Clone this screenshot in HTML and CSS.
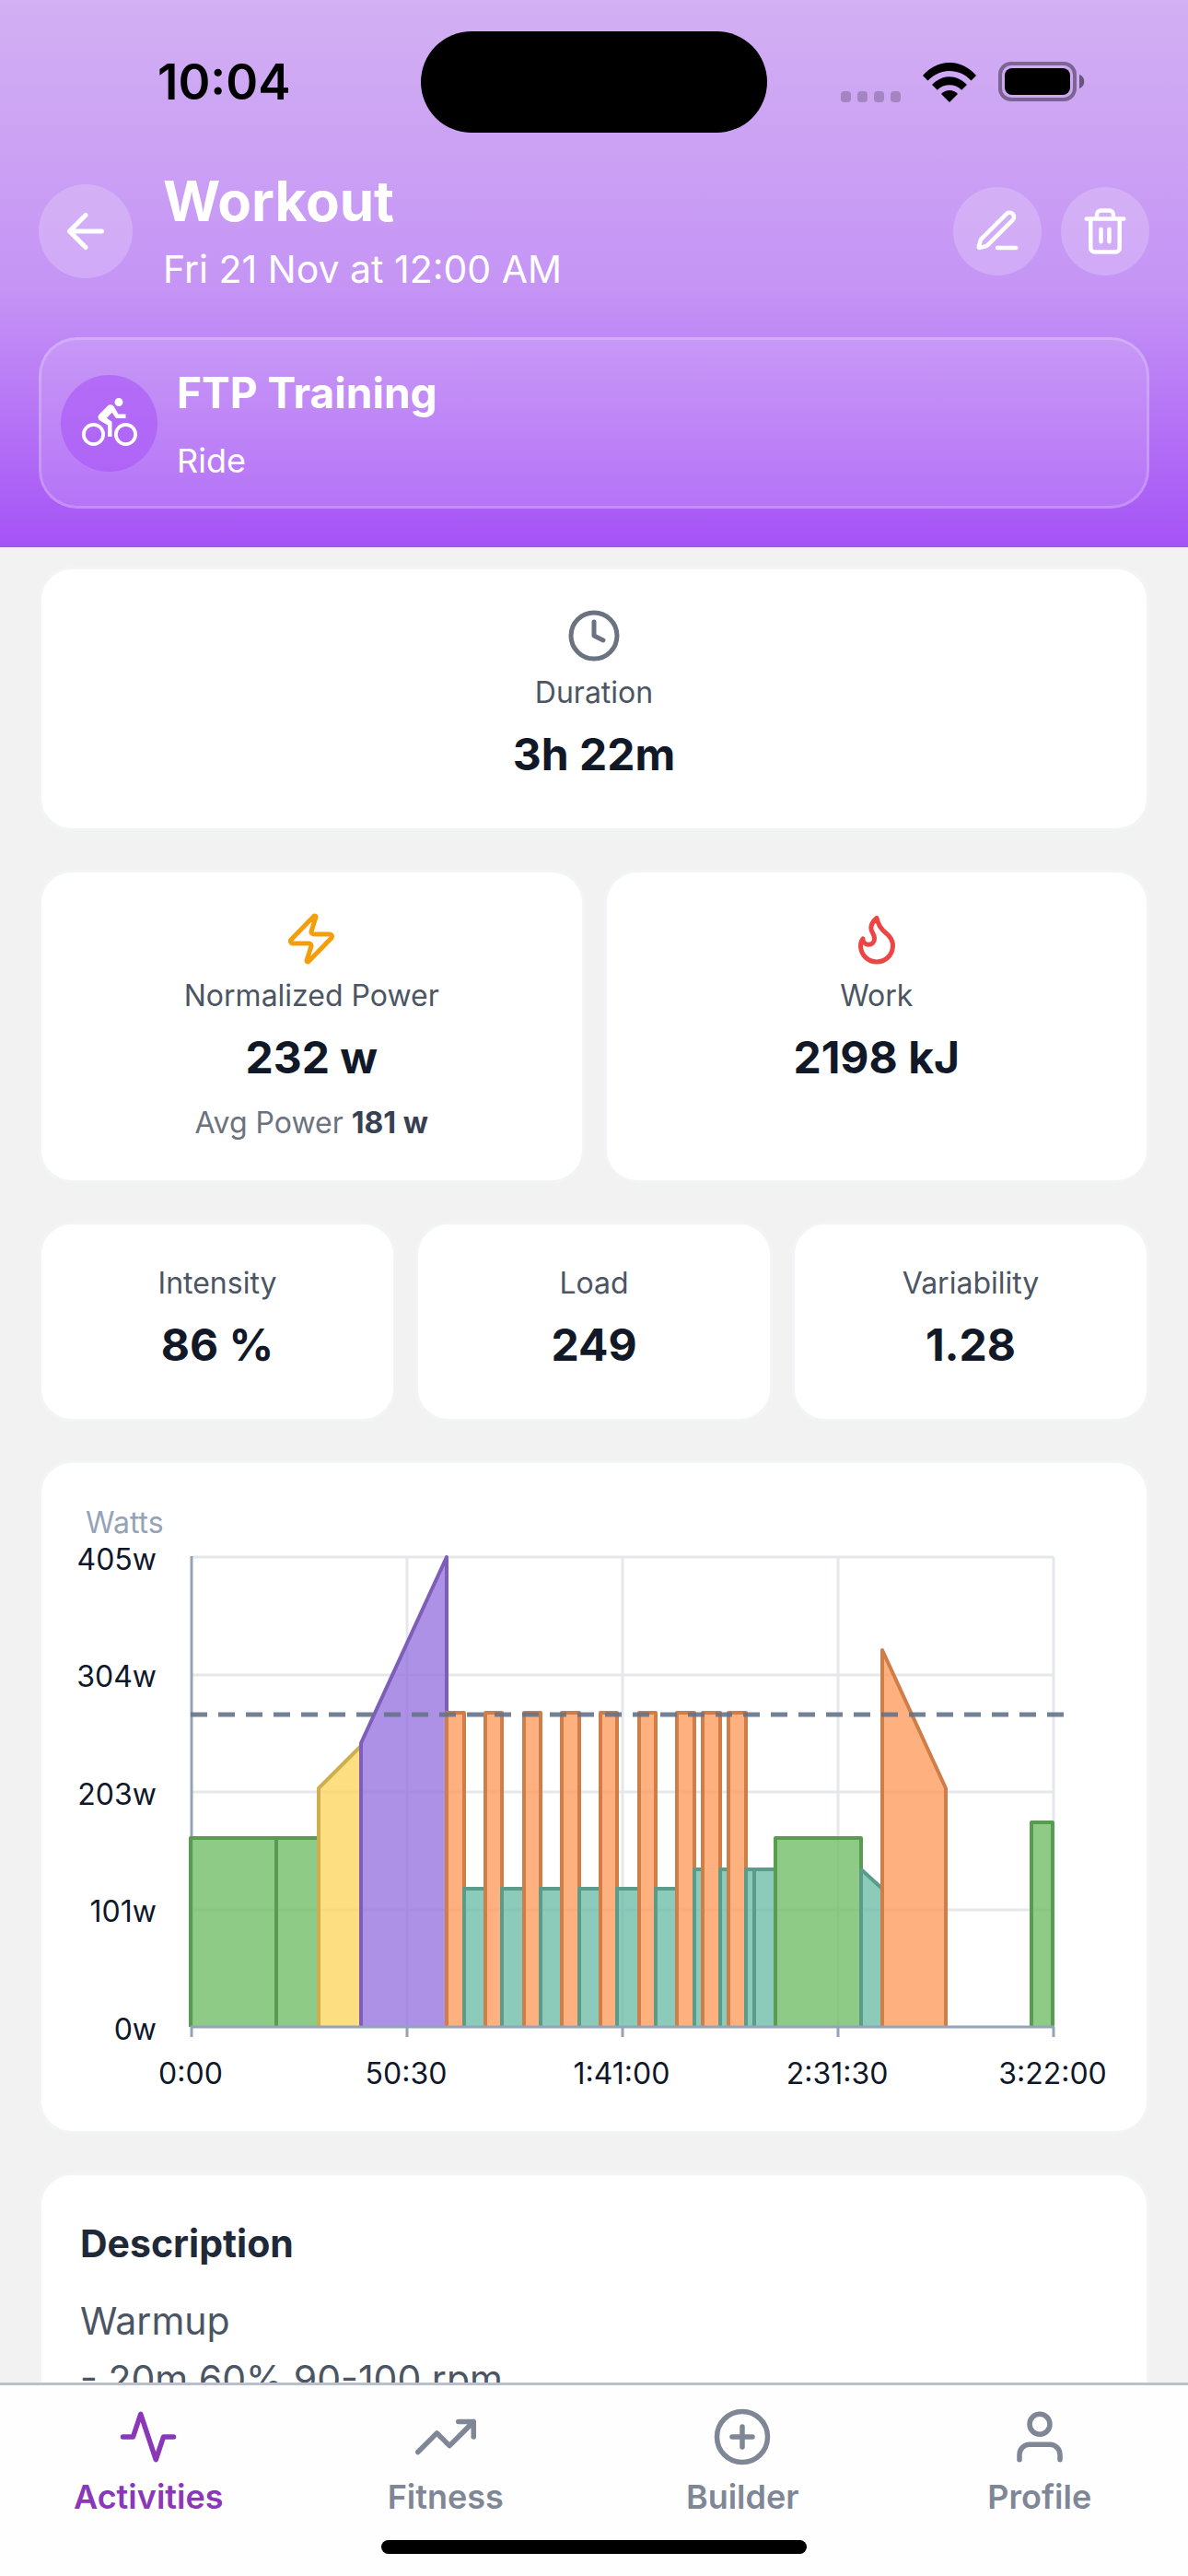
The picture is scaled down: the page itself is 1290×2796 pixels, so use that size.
FILE: index.html
```
<!DOCTYPE html>
<html lang="en">
<head>
<meta charset="utf-8">
<meta name="viewport" content="width=device-width, initial-scale=1">
<title>Workout</title>
<link rel="stylesheet" href="styles.css">
</head>
<body>
<div class="app">
  <header class="header">
    <div class="status-bar">
      <span class="status-time">10:04</span>
      <div class="island"></div>
      <div class="status-icons">
        <svg class="signal" viewBox="0 0 66 12" aria-hidden="true"><rect x="1" width="11" height="12" rx="4"/><rect x="19" width="11" height="12" rx="4"/><rect x="37" width="11" height="12" rx="4"/><rect x="55" width="11" height="12" rx="4"/></svg>
        <svg class="wifi" viewBox="0 0 58 43" aria-hidden="true"><path d="M0 14C16-4.700 42-4.700 58 14L52.500 19.500C39.500 5.600 18.500 5.600 5.500 19.500Z"/><path d="M10 24C21 12.200 37 12.200 48 24L42.200 29.700C35 22.500 23 22.500 15.800 29.700Z"/><path d="M20 34C25 28.800 33 28.800 38 34L29 43Z"/></svg>
        <svg class="battery" viewBox="0 0 94 44" aria-hidden="true"><rect class="battery-case" x="2" y="2" width="81" height="39" rx="12"/><rect x="7" y="7" width="71" height="29" rx="8"/><path class="battery-nub" d="M88 14c7 2 7 13 0 15z"/></svg>
      </div>
    </div>
    <div class="title-row">
      <button class="round-button back-button" type="button" aria-label="Back">
        <svg class="icon icon-md" viewBox="0 0 24 24"><path d="M19 12H5M12 19l-7-7 7-7"/></svg>
      </button>
      <div class="title-text">
        <h1 class="title">Workout</h1>
        <p class="subtitle">Fri 21 Nov at 12:00 AM</p>
      </div>
      <div class="actions">
        <button class="round-button" type="button" aria-label="Edit">
          <svg class="icon icon-sm" viewBox="0 0 24 24"><path d="M12 20h9M16.376 3.622a1 1 0 0 1 3.002 3.002L7.368 18.635a2 2 0 0 1-.855.506l-2.872.838a.5.5 0 0 1-.62-.62l.838-2.872a2 2 0 0 1 .506-.854z"/></svg>
        </button>
        <button class="round-button" type="button" aria-label="Delete">
          <svg class="icon icon-sm" viewBox="0 0 24 24"><path d="M3 6h18M19 6v14a2 2 0 0 1-2 2H7a2 2 0 0 1-2-2V6M8 6V4a2 2 0 0 1 2-2h4a2 2 0 0 1 2 2v2M10 11v6M14 11v6"/></svg>
        </button>
      </div>
    </div>
    <section class="activity">
      <div class="activity-badge">
        <svg class="bike" viewBox="0 0 24 24" aria-hidden="true"><path d="M5,20.5A3.5,3.5 0 0,1 1.5,17A3.5,3.5 0 0,1 5,13.5A3.5,3.5 0 0,1 8.5,17A3.5,3.5 0 0,1 5,20.5M5,12A5,5 0 0,0 0,17A5,5 0 0,0 5,22A5,5 0 0,0 10,17A5,5 0 0,0 5,12M14.8,10H19V8.2H15.8L13.86,4.93C13.57,4.43 13,4.1 12.4,4.1C11.93,4.1 11.5,4.29 11.2,4.6L7.5,8.29C7.19,8.6 7,9 7,9.5C7,10.13 7.33,10.66 7.85,10.97L11.2,13V18H13V11.5L10.75,9.85L13.07,7.5M19,20.5A3.5,3.5 0 0,1 15.5,17A3.5,3.5 0 0,1 19,13.5A3.5,3.5 0 0,1 22.5,17A3.5,3.5 0 0,1 19,20.5M19,12A5,5 0 0,0 14,17A5,5 0 0,0 19,22A5,5 0 0,0 24,17A5,5 0 0,0 19,12M16,4.8C17,4.8 17.8,4 17.8,3C17.8,2 17,1.2 16,1.2C15,1.2 14.2,2 14.2,3C14.2,4 15,4.8 16,4.8Z"/></svg>
      </div>
      <div class="activity-text">
        <h2 class="activity-name">FTP Training</h2>
        <p class="activity-type">Ride</p>
      </div>
    </section>
  </header>

  <main class="content">
    <section class="card stat">
      <svg class="icon icon-md stat-icon clock" viewBox="0 0 24 24" aria-hidden="true"><circle cx="12" cy="12" r="10"/><path d="M12 6v6l4 2"/></svg>
      <p class="label">Duration</p>
      <p class="value">3h 22m</p>
    </section>

    <div class="row">
      <section class="card stat">
        <svg class="icon icon-md stat-icon bolt" viewBox="0 0 24 24" aria-hidden="true"><path d="M4 14a1 1 0 0 1-.78-1.63l9.900-10.200a.5.5 0 0 1 .86.46l-1.920 6.020A1 1 0 0 0 13 10h7a1 1 0 0 1 .78 1.630l-9.900 10.200a.5.5 0 0 1-.86-.46l1.920-6.020A1 1 0 0 0 11 14z"/></svg>
        <p class="label">Normalized Power</p>
        <p class="value">232 w</p>
        <p class="note">Avg Power <strong>181 w</strong></p>
      </section>
      <section class="card stat">
        <svg class="icon icon-md stat-icon flame" viewBox="0 0 24 24" aria-hidden="true"><path d="M8.500 14.500A2.500 2.500 0 0 0 11 12c0-1.380-.5-2-1-3-1.072-2.143-.224-4.054 2-6 .5 2.500 2 4.900 4 6.500 2 1.600 3 3.500 3 5.500a7 7 0 1 1-14 0c0-1.153.433-2.294 1-3a2.500 2.500 0 0 0 2.500 2.500z"/></svg>
        <p class="label">Work</p>
        <p class="value">2198 kJ</p>
      </section>
    </div>

    <div class="row">
      <section class="card stat">
        <p class="label">Intensity</p>
        <p class="value">86 %</p>
      </section>
      <section class="card stat">
        <p class="label">Load</p>
        <p class="value">249</p>
      </section>
      <section class="card stat">
        <p class="label">Variability</p>
        <p class="value">1.28</p>
      </section>
    </div>

    <section class="card chart-card">
      <svg class="chart" viewBox="0 0 1200 725" role="img" aria-label="Planned power in watts over time">
        <g transform="translate(163 102)">
          <path class="grid" d="M0 0H936M0 128H936M0 255H936M0 383H936M234 0V510M468 0V510M702 0V510M936 0V510"/>
          <path class="axis" d="M0 -1V510"/>
          <path class="z2" d="M-1 510V305H92V510"/>
          <path class="z2" d="M92 510V305H138V510"/>
          <path class="z3" d="M138 510V251L184 205V510"/>
          <path class="z5" d="M184 510V202L277 0V510"/>
          <path class="z4" d="M277 510V169H296V510"/><path class="z1" d="M296 510V360H319V510"/>
          <path class="z4" d="M319 510V169H337V510"/><path class="z1" d="M337 510V360H361V510"/>
          <path class="z4" d="M361 510V169H379V510"/><path class="z1" d="M379 510V360H402V510"/>
          <path class="z4" d="M402 510V169H421V510"/><path class="z1" d="M421 510V360H444V510"/>
          <path class="z4" d="M444 510V169H462V510"/><path class="z1" d="M462 510V360H486V510"/>
          <path class="z4" d="M486 510V169H504V510"/><path class="z1" d="M504 510V360H527V510"/>
          <path class="z4" d="M527 510V169H546V510"/><path class="z1" d="M546 510V339H555V510"/>
          <path class="z4" d="M555 510V169H574V510"/><path class="z1" d="M574 510V339H583V510"/>
          <path class="z4" d="M583 510V169H602V510"/><path class="z1" d="M602 510V339H611V510"/>
          <path class="z1" d="M611 510V339H634V510"/>
          <path class="z2" d="M634 510V305H727V510"/>
          <path class="z1" d="M727 510V339L750 360V510"/>
          <path class="z4" d="M750 510V101L819 251V510"/>
          <path class="z2" d="M912 510V288H935V510"/>
          <path class="axis" d="M-1 510H937M0 510V521M234 510V521M468 510V521M702 510V521M936 510V521"/>
          <path class="ftp" d="M-1 171H948"/>
          <text class="unit" x="-115" y="-26">Watts</text>
          <g class="y-labels"><text x="-38" y="14">405w</text><text x="-38" y="141">304w</text><text x="-38" y="269">203w</text><text x="-38" y="396">101w</text><text x="-38" y="524">0w</text></g>
          <g class="x-labels"><text x="-1" y="572">0:00</text><text x="233" y="572">50:30</text><text x="467" y="572">1:41:00</text><text x="701" y="572">2:31:30</text><text x="935" y="572">3:22:00</text></g>
        </g>
      </svg>
    </section>

    <section class="card description">
      <h2 class="description-title">Description</h2>
      <p class="description-text">Warmup<br>- 20m 60% 90-100 rpm</p>
    </section>
  </main>

  <footer class="footer">
    <nav class="tabs">
      <a class="tab tab-active" href="#activities" aria-current="page"><svg class="icon icon-lg" viewBox="0 0 24 24" aria-hidden="true"><path d="M22 12h-4l-3 9L9 3l-3 9H2"/></svg>Activities</a>
      <a class="tab" href="#fitness"><svg class="icon icon-lg" viewBox="0 0 24 24" aria-hidden="true"><path d="M23 6l-9.500 9.500-5-5L1 18M17 6h6v6"/></svg>Fitness</a>
      <a class="tab" href="#builder"><svg class="icon icon-lg" viewBox="0 0 24 24" aria-hidden="true"><circle cx="12" cy="12" r="10"/><path d="M12 8v8M8 12h8"/></svg>Builder</a>
      <a class="tab" href="#profile"><svg class="icon icon-lg" viewBox="0 0 24 24" aria-hidden="true"><path d="M20 21v-2a4 4 0 0 0-4-4H8a4 4 0 0 0-4 4v2"/><circle cx="12" cy="7" r="4"/></svg>Profile</a>
    </nav>
    <div class="home-indicator"></div>
  </footer>
</div>
</body>
</html>
```
FILE: styles.css
```
* { box-sizing: border-box; }

body {
  margin: 0;
  background: #f2f2f2;
  color: #111827;
  font-family: Inter, "Liberation Sans", sans-serif;
}

h1, h2, p { margin: 0; }

.app {
  display: flex;
  flex-direction: column;
  height: 100vh;
}

/* Header */
.header {
  flex: none;
  padding: 0 42px 42px;
  background: linear-gradient(#d2b0f3, #c594f5 53%, #a553f6);
  color: #fff;
}

.status-bar {
  display: grid;
  grid-template-columns: 1fr auto 1fr;
  align-items: center;
  height: 177px;
  color: #000;
}

.status-time {
  padding-left: 129px;
  font-size: 53px;
  font-weight: 600;
}

.island {
  width: 376px;
  height: 110px;
  border-radius: 55px;
  background: #000;
}

.status-icons {
  display: flex;
  justify-content: flex-end;
  align-items: flex-end;
  gap: 24px;
  padding-right: 70px;
}

.signal { width: 66px; height: 12px; opacity: .2; }
.wifi { width: 58px; height: 43px; }
.battery { width: 94px; height: 44px; }
.battery-case { fill: none; stroke: #000; stroke-width: 4; opacity: .4; }
.battery-nub { opacity: .5; }

.title-row {
  display: flex;
  align-items: center;
  gap: 33px;
  margin-top: 2px;
}

.title-text { flex: 1; }

.title {
  font-size: 60px;
  line-height: 78px;
  font-weight: 700;
}

.subtitle {
  margin-top: 5px;
  font-size: 41px;
  line-height: 60px;
}

.actions { display: flex; gap: 21px; }

.round-button {
  display: grid;
  place-items: center;
  width: 96px;
  height: 96px;
  padding: 0;
  border: 0;
  border-radius: 50%;
  background: rgba(255, 255, 255, .2);
  color: #fff;
}

.back-button { width: 102px; height: 102px; }

.icon {
  display: block;
  fill: none;
  stroke: currentColor;
  stroke-width: 2;
  stroke-linecap: round;
  stroke-linejoin: round;
}

.icon-sm { width: 54px; height: 54px; }
.icon-md { width: 60px; height: 60px; }
.icon-lg { width: 66px; height: 66px; }

.activity {
  display: flex;
  align-items: center;
  gap: 21px;
  margin-top: 44px;
  padding: 22px 21px;
  border: 3px solid rgba(255, 255, 255, .2);
  border-radius: 42px;
  background: rgba(255, 255, 255, .14);
}

.activity-badge {
  display: grid;
  place-items: center;
  width: 105px;
  height: 105px;
  border-radius: 50%;
  background: rgba(168, 85, 247, .6);
}

.bike { width: 60px; height: 60px; fill: #fff; }
.activity-name { font-size: 46px; line-height: 70px; font-weight: 700; }
.activity-type { margin-top: 12px; font-size: 36px; line-height: 54px; }

/* Content */
.content {
  display: flex;
  flex: 1;
  flex-direction: column;
  gap: 42px;
  min-height: 0;
  padding: 21px 42px;
  overflow-y: auto;
  scrollbar-width: none;
}

.card {
  flex: none;
  padding: 42px;
  border: 3px solid #f3f4f6;
  border-radius: 36px;
  background: #fff;
}

.row { display: flex; flex: none; gap: 21px; }
.row .card { flex: 1; }

.stat { text-align: center; }
.stat-icon { margin: 0 auto 10px; }
.clock { color: #6b7280; }
.bolt { color: #f59e0b; }
.flame { color: #ef4444; }
.label { color: #4b5563; font-size: 32px; line-height: 44px; }
.value { margin-top: 7px; font-size: 48px; line-height: 76px; font-weight: 700; }
.note { margin-top: 13px; color: #6b7280; font-size: 32px; line-height: 40px; }
.note strong { color: #374151; font-weight: 700; }

/* Power chart */
.chart-card { padding: 0; }
.chart { display: block; width: 100%; font-size: 32px; }
.grid { fill: none; stroke: #e5e7eb; stroke-width: 3; }
.axis { fill: none; stroke: #94a3b8; stroke-width: 3; }
.ftp { stroke: #64748b; stroke-width: 5; stroke-dasharray: 18 12; opacity: .9; }
.z1, .z2, .z3, .z4, .z5 { fill-opacity: .8; stroke-width: 4; stroke-linejoin: round; }
.z1 { fill: #6fbea9; stroke: #5a9b8a; }
.z2 { fill: #71be68; stroke: #589b51; }
.z3 { fill: #fcd763; stroke: #cfae50; }
.z4 { fill: #fe9d5e; stroke: #cf7e49; }
.z5 { fill: #9875e1; stroke: #7d5eb9; }
.unit { fill: #94a3b8; }
.y-labels { fill: #0f172a; text-anchor: end; }
.x-labels { fill: #0f172a; text-anchor: middle; }

/* Description */
.description-title { color: #1f2937; font-size: 41px; line-height: 64px; font-weight: 700; }
.description-text { margin-top: 21px; color: #4b5563; font-size: 41px; line-height: 63px; }

/* Tab bar */
.footer {
  flex: none;
  padding: 23px 0 24px;
  border-top: 3px solid #b9c0cb;
  background: #fefefe;
}

.tabs { display: grid; grid-template-columns: repeat(4, 1fr); }

.tab {
  display: flex;
  flex-direction: column;
  align-items: center;
  gap: 8px;
  color: #7f8797;
  font-size: 36px;
  line-height: 48px;
  font-weight: 600;
  text-decoration: none;
}

.tab-active { color: #8a38b9; }

.home-indicator {
  width: 462px;
  height: 15px;
  margin: 23px auto 0;
  border-radius: 8px;
  background: #000;
}
```
